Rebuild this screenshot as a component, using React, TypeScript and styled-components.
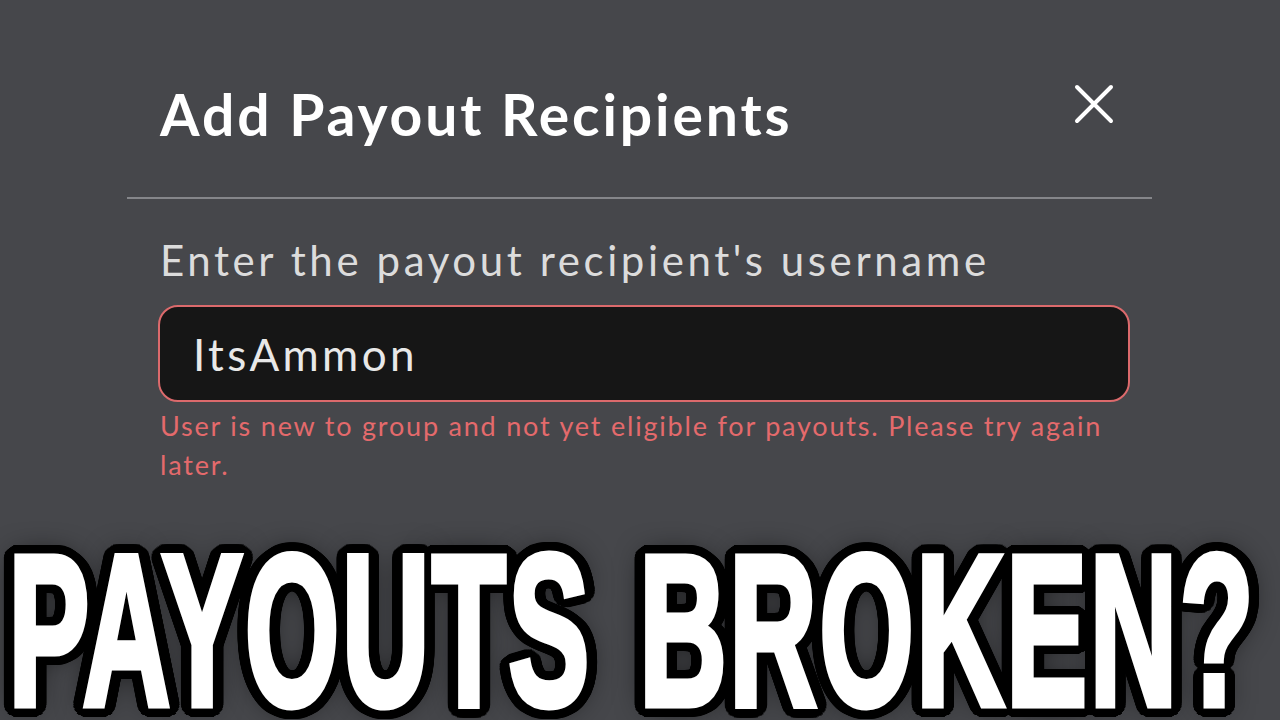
import React from "react";
import styled, { createGlobalStyle } from "styled-components";

const GlobalStyle = createGlobalStyle`
  html, body {
    margin: 0;
    padding: 0;
    background: #46474b;
    overflow: hidden;
  }
  #root {
    width: 1280px;
    height: 720px;
  }
`;

// black outline for the big caption, built from many offsets
const ring = (rx: number, ry: number, steps: number) =>
  Array.from({ length: steps }, (_, i) => {
    const a = (i / steps) * Math.PI * 2;
    return `${(Math.cos(a) * rx).toFixed(1)}px ${(Math.sin(a) * ry).toFixed(1)}px 0 #000`;
  }).join(", ");

const outline = [ring(22, 12, 48), ring(14, 8, 32), ring(7, 4, 16)].join(", ");

const Page = styled.div`
  width: 1280px;
  height: 720px;
  display: flex;
  flex-direction: column;
  background: #46474b;
  overflow: hidden;
`;

const Modal = styled.div`
  display: flex;
  flex-direction: column;
  margin: 0 128px 0 127px;
`;

const Header = styled.div`
  display: flex;
  align-items: flex-start;
  justify-content: space-between;
  height: 197px;
  padding: 0 38px 0 33px;
  border-bottom: 2px solid #85868a;
`;

const Title = styled.h1`
  margin: 80px 0 0;
  font-family: "Lato", "Liberation Sans", sans-serif;
  font-weight: 700;
  font-size: 57px;
  line-height: 68px;
  color: #ffffff;
  letter-spacing: 2.9px;
`;

const CloseButton = styled.button`
  margin-top: 84px;
  width: 40px;
  height: 40px;
  padding: 0;
  border: none;
  background: none;
  display: flex;
  align-items: center;
  justify-content: center;
`;

const Body = styled.div`
  display: flex;
  flex-direction: column;
  padding: 0 22px 0 31px;
`;

const Label = styled.label`
  margin: 36px 0 0 2px;
  font-family: "Lato", "Liberation Sans", sans-serif;
  font-weight: 400;
  font-size: 42px;
  line-height: 50px;
  color: #dcdcdc;
  letter-spacing: 3.6px;
`;

const InputBox = styled.div`
  margin-top: 20px;
  height: 93px;
  border: 2px solid #dc6a6c;
  border-radius: 20px;
  background: #161616;
  display: flex;
  align-items: center;
  padding-left: 33px;
  font-family: "Lato", "Liberation Sans", sans-serif;
  font-size: 44px;
  color: #e8e8e8;
  letter-spacing: 3.4px;
`;

const ErrorText = styled.p`
  margin: 4px 0 0 2px;
  max-width: 970px;
  font-family: "Lato", "Liberation Sans", sans-serif;
  font-size: 27px;
  line-height: 39px;
  color: #e46a6c;
  letter-spacing: 1.8px;
`;

const CaptionRow = styled.div`
  flex: 1;
  display: flex;
  align-items: flex-end;
  justify-content: center;
  padding-right: 16px;
`;

const Caption = styled.div`
  flex: none;
  font-family: "Liberation Sans", "DejaVu Sans", sans-serif;
  font-weight: 700;
  font-size: 216px;
  line-height: 180px;
  color: #ffffff;
  white-space: nowrap;
  word-spacing: 20px;
  letter-spacing: 4px;
  -webkit-text-stroke: 7px #ffffff;
  text-shadow: ${outline}, 0 0 40px rgba(0, 0, 0, 0.9);
  transform: scaleX(0.563);
  transform-origin: center bottom;
`;

export default function App() {
  return (
    <>
      <GlobalStyle />
      <Page>
        <Modal>
          <Header>
            <Title>Add Payout Recipients</Title>
            <CloseButton aria-label="Close">
              <svg width="40" height="40" viewBox="0 0 40 40">
                <path
                  d="M3 3 L37 37 M37 3 L3 37"
                  stroke="#ffffff"
                  strokeWidth="4"
                  strokeLinecap="round"
                />
              </svg>
            </CloseButton>
          </Header>
          <Body>
            <Label>Enter the payout recipient's username</Label>
            <InputBox>ItsAmmon</InputBox>
            <ErrorText>
              User is new to group and not yet eligible for payouts. Please try again later.
            </ErrorText>
          </Body>
        </Modal>
        <CaptionRow>
          <Caption>PAYOUTS BROKEN?</Caption>
        </CaptionRow>
      </Page>
    </>
  );
}
